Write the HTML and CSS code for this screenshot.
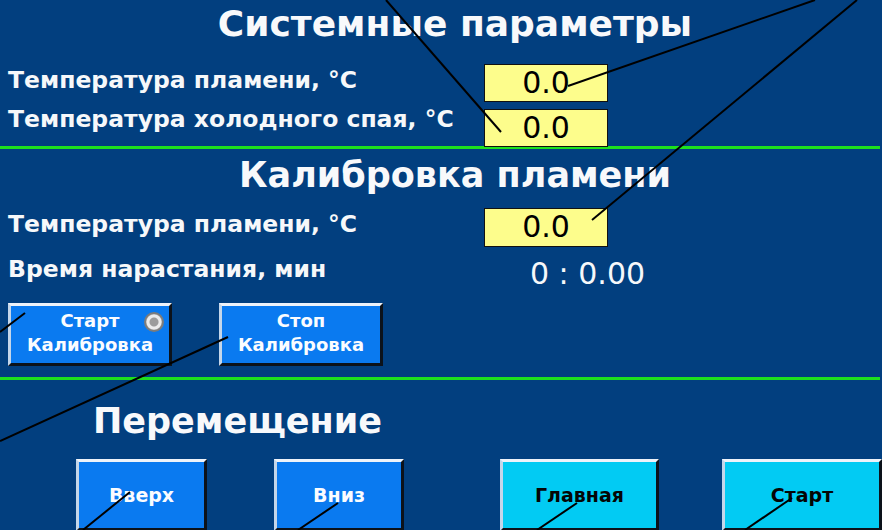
FILE: index.html
```html
<!DOCTYPE html>
<html>
<head>
	<title>Калибровка пламени</title>
	<meta charset="utf-8">
	<link rel="stylesheet" href="styles.css">
</head>
<body>

	<div class="screen">
		<section class="block block-sys">
			<h1 class="title title-main">Системные параметры</h1>
			<div class="fields">
				<div class="labels">
					<div>Температура пламени, °C</div>
					<div>Температура холодного спая, °C</div>
				</div>
				<div class="values">
					<div class="value">0.0</div>
					<div class="value">0.0</div>
				</div>
			</div>
		</section>

		<div class="divider"></div>

		<section class="block block-cal">
			<h1 class="title">Калибровка пламени</h1>
			<div class="fields fields-cal">
				<div class="labels">
					<div>Температура пламени, °C</div>
					<div>Время нарастания, мин</div>
				</div>
				<div class="values">
					<div class="value value-tall">0.0</div>
					<div class="timer">0 : 0.00</div>
				</div>
			</div>
			<div class="cal-buttons">
				<button class="key key-cal">Старт<br>Калибровка<span class="lamp"></span></button>
				<button class="key key-cal">Стоп<br>Калибровка</button>
			</div>
		</section>

		<div class="divider"></div>

		<section class="block block-move">
			<h1 class="title title-left">Перемещение</h1>
			<div class="nav">
				<button class="key nav-key nav-up">Вверх</button>
				<button class="key nav-key nav-down">Вниз</button>
				<button class="key nav-key nav-home alt">Главная</button>
				<button class="key nav-key nav-start alt">Старт</button>
			</div>
		</section>

		<!-- tag leaders -->
		<svg class="leaders" width="882" height="530" viewBox="0 0 882 530">
			<g stroke="#000" stroke-width="2" fill="none">
				<line x1="386" y1="0" x2="501" y2="132"/>
				<line x1="815" y1="0" x2="568" y2="86"/>
				<line x1="857" y1="0" x2="592" y2="220"/>
				<line x1="0" y1="332" x2="25" y2="313"/>
				<line x1="228" y1="337" x2="0" y2="441"/>
				<line x1="130" y1="492" x2="83" y2="530"/>
				<line x1="338" y1="503" x2="298" y2="530"/>
				<line x1="577" y1="503" x2="537" y2="530"/>
				<line x1="792" y1="498" x2="745" y2="530"/>
			</g>
		</svg>
	</div>

</body>
</html>
```

FILE: styles.css
```css
* {
	box-sizing: border-box;
	font-family: "DejaVu Sans", Verdana, sans-serif;
}
body {
	margin: 0;
	background-color: #023f7f;
}
.screen {
	position: relative;
	width: 882px;
	height: 530px;
	overflow: hidden;
	background-color: #023f7f;
	color: #f6f8fa;
}

/* sections */
.block-sys {
	height: 146px;
	padding-top: 2px;
}
.block-cal {
	height: 228px;
	padding-top: 4px;
}
.block-move {
	padding-top: 19px;
}
.divider {
	height: 3px;
	margin-right: 2px;
	background-color: #1ee11e;
}

.title {
	margin: 0;
	padding-left: 28px;
	font-size: 35px;
	line-height: 44px;
	font-weight: bold;
	text-align: center;
	color: #f8f9fb;
}
.title-main {
	font-size: 36px;
}
.title-left {
	padding-left: 93px;
	text-align: left;
}

/* label / value rows */
.fields {
	display: grid;
	grid-template-columns: 476px 200px;
	padding-left: 8px;
	margin-top: 15px;
}
.labels {
	font-size: 23.5px;
	font-weight: bold;
	line-height: 39px;
	white-space: nowrap;
}
.values {
	display: flex;
	flex-direction: column;
	gap: 7px;
	padding-top: 3px;
}
.value {
	width: 124px;
	height: 38px;
	border: 1px solid #111;
	background-color: #fdfd8c;
	color: #000;
	font-size: 30px;
	line-height: 36px;
	text-align: center;
}
.value-tall {
	height: 39px;
}

.fields-cal {
	margin-top: 5px;
}
.fields-cal .labels {
	line-height: 45px;
}
.fields-cal .values {
	gap: 0;
	padding-top: 6px;
}
.timer {
	margin-top: 9px;
	margin-left: 46px;
	font-size: 30px;
	line-height: 36px;
	white-space: nowrap;
}

/* buttons */
.key {
	position: relative;
	margin: 0;
	padding: 0;
	border: 3px solid;
	border-color: #eef3fa #0c121a #0c121a #c4d6ea;
	background-color: #0a7af0;
	color: #fafcff;
	font-weight: bold;
	text-align: center;
}
.key.alt {
	background-color: #02cbf3;
	color: #050505;
}

.cal-buttons {
	display: flex;
	gap: 47px;
	padding-left: 8px;
	margin-top: 11px;
}
.key-cal {
	width: 164px;
	height: 63px;
	padding-bottom: 3px;
	font-size: 18px;
	line-height: 24px;
}
.lamp {
	position: absolute;
	left: 133px;
	top: 6px;
	width: 20px;
	height: 20px;
	border-radius: 50%;
	border: 2px solid #7c7c7c;
	background: radial-gradient(circle, #9c9c9c 0 4px, #ececec 5px 7px, #b4b4b4 8px);
}

.nav {
	display: flex;
	margin-top: 16px;
}
.nav-key {
	height: 72px;
	font-size: 19px;
	line-height: 24px;
	flex: none;
}
.nav-up {
	margin-left: 76px;
	width: 131px;
}
.nav-down {
	margin-left: 67px;
	width: 130px;
}
.nav-home {
	margin-left: 96px;
	width: 159px;
}
.nav-start {
	margin-left: 63px;
	width: 160px;
}

.leaders {
	position: absolute;
	left: 0;
	top: 0;
	pointer-events: none;
}
```
